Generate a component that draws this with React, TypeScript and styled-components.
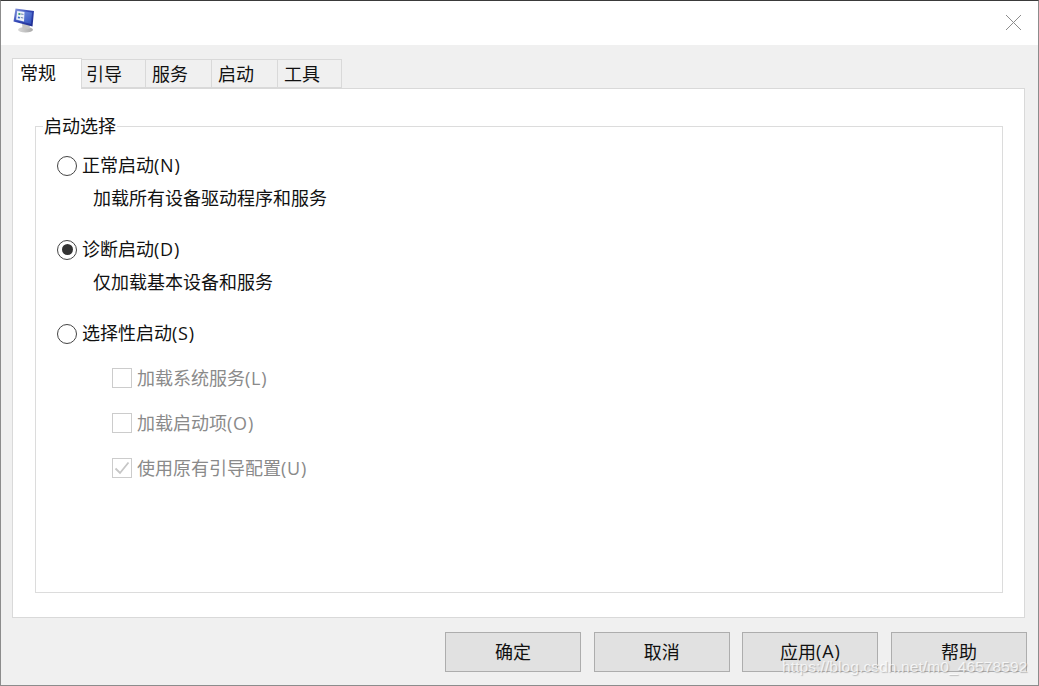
import * as React from 'react';
import styled, {createGlobalStyle} from 'styled-components';

const FONT = `'Open Sans', 'Noto Sans CJK SC', 'Noto Sans', sans-serif`;

const GlobalStyle = createGlobalStyle`
  html, body {
    margin: 0;
    padding: 0;
    background: #f0f0f0;
  }
`;

const tabs = [
  {label: '常规', width: 70, inset: 7},
  {label: '引导', width: 64, inset: 4},
  {label: '服务', width: 66, inset: 6},
  {label: '启动', width: 66, inset: 6},
  {label: '工具', width: 64, inset: 6},
];

const App = () => {
  return (
    <Window>
      <GlobalStyle />
      <TitleBar>
        <AppIcon />
        <CloseIcon />
      </TitleBar>
      <Body>
        <TabStrip>
          {tabs.map((tab, i) => (
            <Tab key={tab.label} active={i === 0} width={tab.width} inset={tab.inset}>
              {tab.label}
            </Tab>
          ))}
        </TabStrip>
        <TabPanel>
          <Group>
            <GroupTitle>启动选择</GroupTitle>
            <OptionRow>
              <Radio />
              <OptionLabel>正常启动<Key>(N)</Key></OptionLabel>
            </OptionRow>
            <OptionHint>加载所有设备驱动程序和服务</OptionHint>
            <OptionRow>
              <Radio checked />
              <OptionLabel>诊断启动<Key>(D)</Key></OptionLabel>
            </OptionRow>
            <OptionHint>仅加载基本设备和服务</OptionHint>
            <OptionRow>
              <Radio />
              <OptionLabel>选择性启动<Key>(S)</Key></OptionLabel>
            </OptionRow>
            <CheckList>
              <CheckRow>
                <CheckBox />
                <CheckLabel>加载系统服务<Key>(L)</Key></CheckLabel>
              </CheckRow>
              <CheckRow>
                <CheckBox />
                <CheckLabel>加载启动项<Key>(O)</Key></CheckLabel>
              </CheckRow>
              <CheckRow>
                <CheckBox>
                  <svg width='18' height='18' viewBox='0 0 18 18'>
                    <path d='M2.5 9.5 L7 14 L15.5 3.5' fill='none' stroke='#c6c6c6' strokeWidth='1.8' />
                  </svg>
                </CheckBox>
                <CheckLabel>使用原有引导配置<Key>(U)</Key></CheckLabel>
              </CheckRow>
            </CheckList>
          </Group>
        </TabPanel>
        <ButtonBar>
          <Button>确定</Button>
          <Button>取消</Button>
          <Button>应用<Key>(A)</Key></Button>
          <Button>帮助</Button>
        </ButtonBar>
      </Body>
      <Watermark>https://blog.csdn.net/m0_46578592</Watermark>
    </Window>
  );
};

const AppIcon = () => (
  <IconSvg width='24' height='26' viewBox='0 0 24 26'>
    <defs>
      <linearGradient id='frame' x1='0' y1='0' x2='1' y2='1'>
        <stop offset='0' stopColor='#8f9fe0' />
        <stop offset='0.45' stopColor='#3347b5' />
        <stop offset='1' stopColor='#1c2a8c' />
      </linearGradient>
      <linearGradient id='screen' x1='0' y1='0' x2='1' y2='1'>
        <stop offset='0' stopColor='#7f9be6' />
        <stop offset='1' stopColor='#2f4fbd' />
      </linearGradient>
      <linearGradient id='stand' x1='0' y1='0' x2='1' y2='0'>
        <stop offset='0' stopColor='#d8d8d8' />
        <stop offset='1' stopColor='#a8a8a8' />
      </linearGradient>
    </defs>
    <ellipse cx='12.5' cy='21.8' rx='7.5' ry='2.8' fill='url(#stand)' />
    <path d='M9 15 L17 17 L16.5 21 L9.5 20.5 Z' fill='#c4c4c4' />
    <path d='M2.5 0.5 L21 3 L19.5 18.5 L0.5 13.5 Z' fill='url(#frame)' />
    <path d='M4 2.5 L19 4.5 L18 16 L2.8 12 Z' fill='url(#screen)' />
    <path d='M4.2 3 L11.5 4 L11 13.6 L3.2 11.6 Z' fill='#eef3fa' />
    <path d='M5.5 5 L7.5 5.3 L7.3 7 L5.3 6.7 Z' fill='#2f9a6a' />
    <path d='M5 8.5 L7 8.9 L6.8 10.6 L4.8 10.2 Z' fill='#3a66c8' />
    <path d='M8 6 L10.5 6.4 M7.8 9.5 L10.3 10' stroke='#6f86b0' strokeWidth='1' />
  </IconSvg>
);

const CloseIcon = () => (
  <CloseSvg width='17' height='17' viewBox='0 0 17 17'>
    <path d='M1 1 L16 16 M16 1 L1 16' stroke='#8c8c8c' strokeWidth='1' fill='none' />
  </CloseSvg>
);

const Window = styled.div`
  position: relative;
  box-sizing: border-box;
  width: 1039px;
  height: 686px;
  overflow: hidden;
  display: flex;
  flex-direction: column;
  background: #f0f0f0;
  border-top: 1px solid #3a3a3a;
  border-left: 1px solid #8c8c8c;
  border-right: 1px solid #8c8c8c;
  border-bottom: 1px solid #8c8c8c;
  font-family: ${FONT};
  color: #111;
  &::after {
    content: '';
    position: absolute;
    top: 0;
    right: -1px;
    width: 1px;
    height: 58px;
    background: #3a3a3a;
  }
`;

const TitleBar = styled.div`
  flex: none;
  height: 44px;
  background: #fff;
  display: flex;
  align-items: center;
  justify-content: space-between;
  padding: 0 16px 0 12px;
`;

const IconSvg = styled.svg`
  display: block;
  margin: -4px 0 0 0;
`;

const CloseSvg = styled.svg`
  display: block;
  margin-top: -1px;
`;

const Body = styled.div`
  flex: 1;
  display: flex;
  flex-direction: column;
  padding: 13px 0 0 11px;
`;

const TabStrip = styled.div`
  flex: none;
  height: 30px;
  display: flex;
  align-items: flex-end;
  position: relative;
  z-index: 1;
`;

const Tab = styled.div<{active?: boolean; width: number; inset: number}>`
  box-sizing: border-box;
  width: ${(props) => props.width}px;
  height: ${(props) => props.active ? '31px' : '29px'};
  margin-bottom: ${(props) => props.active ? '-1px' : '0'};
  padding: 1px 0 0 ${(props) => props.inset}px;
  background: ${(props) => props.active ? '#fff' : '#f0f0f0'};
  border: 1px solid #d9d9d9;
  border-left: ${(props) => props.active ? '1px solid #d9d9d9' : 'none'};
  border-bottom: ${(props) => props.active ? 'none' : '1px solid #d9d9d9'};
  font-size: 18px;
  line-height: 26px;
  white-space: nowrap;
`;

const TabPanel = styled.div`
  box-sizing: border-box;
  width: 1013px;
  height: 530px;
  background: #fff;
  border: 1px solid #d9d9d9;
  padding: 37px 21px 23px 22px;
`;

const Group = styled.div`
  position: relative;
  box-sizing: border-box;
  width: 968px;
  height: 467px;
  border: 1px solid #dcdcdc;
  padding: 22px 0 0 21px;
`;

const GroupTitle = styled.div`
  position: absolute;
  top: -12px;
  left: 7px;
  padding: 0 1px;
  background: #fff;
  font-size: 18px;
  line-height: 22px;
`;

const OptionRow = styled.div`
  height: 34px;
  display: flex;
  align-items: center;
  gap: 5px;
`;

const OptionLabel = styled.span`
  font-size: 18px;
  line-height: 24px;
  position: relative;
  top: -1px;
`;

const Key = styled.span`
  letter-spacing: 0.8px;
`;

const OptionHint = styled.div`
  height: 50px;
  padding: 3px 0 0 36px;
  box-sizing: border-box;
  font-size: 18px;
  line-height: 24px;
`;

const Radio = styled.span<{checked?: boolean}>`
  box-sizing: border-box;
  flex: none;
  width: 20px;
  height: 20px;
  margin-top: -1px;
  border-radius: 50%;
  border: 1.5px solid #444;
  background: #fff;
  display: flex;
  align-items: center;
  justify-content: center;
  &::after {
    content: '';
    display: ${(props) => props.checked ? 'block' : 'none'};
    width: 11px;
    height: 11px;
    border-radius: 50%;
    background: #333;
  }
`;

const CheckList = styled.div`
  display: flex;
  flex-direction: column;
  gap: 25px;
  padding: 17px 0 0 55px;
`;

const CheckRow = styled.div`
  height: 20px;
  display: flex;
  align-items: center;
  gap: 5px;
`;

const CheckBox = styled.span`
  box-sizing: border-box;
  flex: none;
  width: 20px;
  height: 20px;
  border: 1px solid #cccccc;
  background: #fff;
  display: flex;
  align-items: center;
  justify-content: center;
`;

const CheckLabel = styled.span`
  font-size: 18px;
  line-height: 24px;
  color: #8a8a8a;
`;

const ButtonBar = styled.div`
  flex: none;
  display: flex;
  gap: 12.67px;
  margin: 14px 0 0 433px;
`;

const Button = styled.div`
  box-sizing: border-box;
  flex: none;
  width: 136px;
  height: 40px;
  padding-bottom: 2px;
  background: #e1e1e1;
  border: 1px solid #adadad;
  font-size: 18px;
  display: flex;
  align-items: center;
  justify-content: center;
`;

const Watermark = styled.div`
  position: absolute;
  left: 781px;
  top: 657px;
  font-family: 'Liberation Sans', sans-serif;
  font-size: 15.5px;
  line-height: 18px;
  white-space: nowrap;
  letter-spacing: 0.1px;
  color: rgba(255, 255, 255, 0.75);
  text-shadow: 1px 1px 1px rgba(110, 110, 110, 0.4);
`;

export default App;
